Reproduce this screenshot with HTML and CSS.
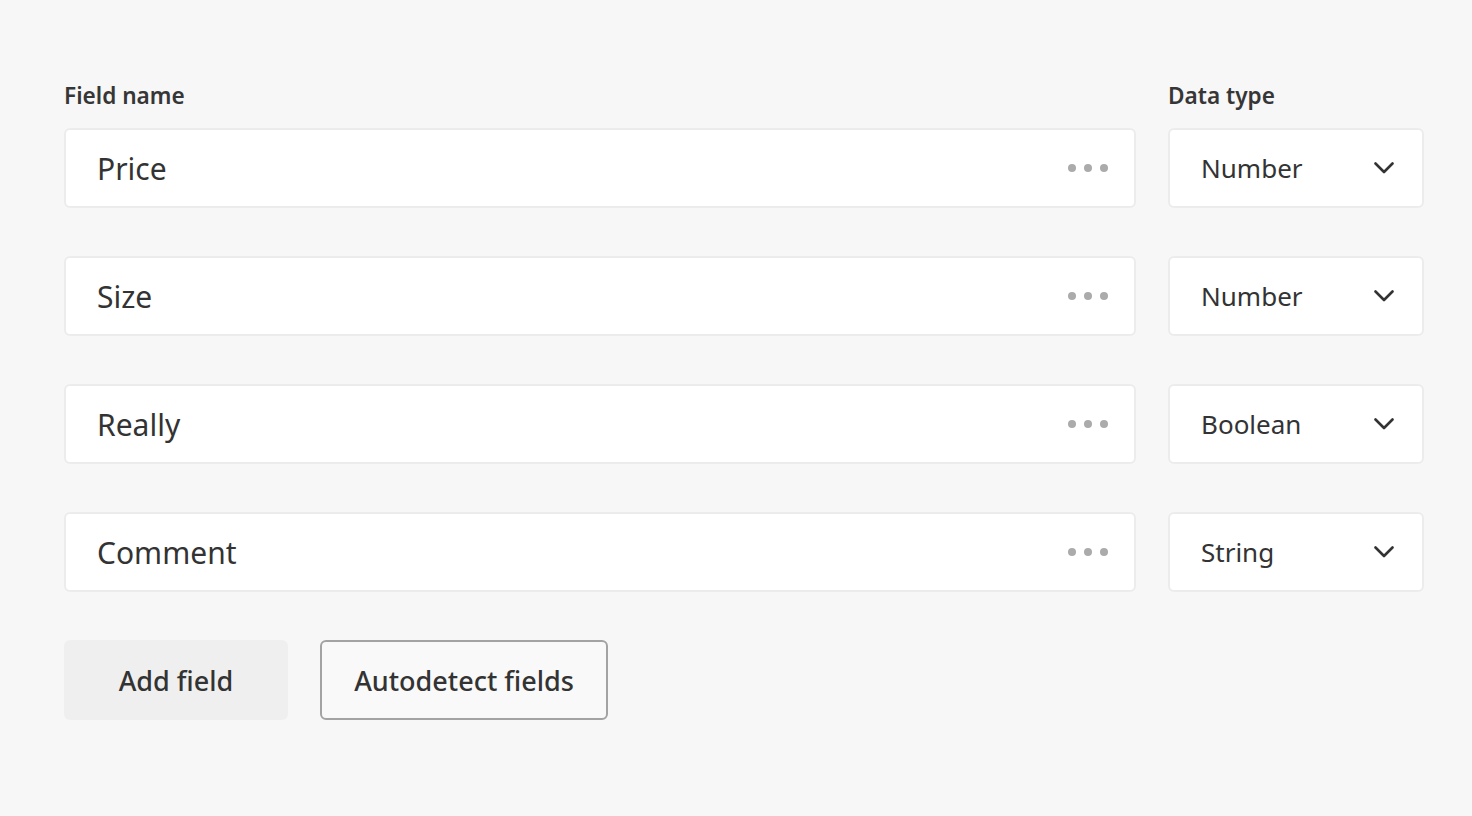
FILE: index.html
```html
<!DOCTYPE html>
<html>
<head>
<meta charset="utf-8">
<link rel="stylesheet" href="styles.css">
</head>
<body>
<div class="form">
  <div class="row head">
    <div class="col-name label">Field name</div>
    <div class="col-type label">Data type</div>
  </div>
  <div class="rows">
    <div class="row">
      <div class="col-name field"><span class="value">Price</span><span class="dots"><i></i><i></i><i></i></span></div>
      <div class="col-type select"><span class="svalue">Number</span><svg class="chev" width="20" height="12" viewBox="0 0 20 12"><path d="M1.5 1.5 L10 10 L18.5 1.5" fill="none" stroke="#333" stroke-width="2.6" stroke-linecap="round" stroke-linejoin="round"/></svg></div>
    </div>
    <div class="row">
      <div class="col-name field"><span class="value">Size</span><span class="dots"><i></i><i></i><i></i></span></div>
      <div class="col-type select"><span class="svalue">Number</span><svg class="chev" width="20" height="12" viewBox="0 0 20 12"><path d="M1.5 1.5 L10 10 L18.5 1.5" fill="none" stroke="#333" stroke-width="2.6" stroke-linecap="round" stroke-linejoin="round"/></svg></div>
    </div>
    <div class="row">
      <div class="col-name field"><span class="value">Really</span><span class="dots"><i></i><i></i><i></i></span></div>
      <div class="col-type select"><span class="svalue">Boolean</span><svg class="chev" width="20" height="12" viewBox="0 0 20 12"><path d="M1.5 1.5 L10 10 L18.5 1.5" fill="none" stroke="#333" stroke-width="2.6" stroke-linecap="round" stroke-linejoin="round"/></svg></div>
    </div>
    <div class="row">
      <div class="col-name field"><span class="value">Comment</span><span class="dots"><i></i><i></i><i></i></span></div>
      <div class="col-type select"><span class="svalue">String</span><svg class="chev" width="20" height="12" viewBox="0 0 20 12"><path d="M1.5 1.5 L10 10 L18.5 1.5" fill="none" stroke="#333" stroke-width="2.6" stroke-linecap="round" stroke-linejoin="round"/></svg></div>
    </div>
  </div>
  <div class="actions">
    <button class="btn btn-fill">Add field</button>
    <button class="btn btn-outline">Autodetect fields</button>
  </div>
</div>
</body>
</html>
```
FILE: styles.css
```css
html, body {
  margin: 0;
  padding: 0;
  background: #f7f7f7;
  font-family: "Noto Sans", "Open Sans", sans-serif;
  color: #333;
}
.form {
  padding: 80px 48px 0 64px;
  width: 1360px;
}
.row {
  display: flex;
  gap: 32px;
}
.col-name { width: 1072px; box-sizing: border-box; }
.col-type { width: 256px; box-sizing: border-box; }
.head { height: 48px; }
.label {
  font-size: 22.6px;
  font-weight: 600;
  line-height: 32px;
  color: #363636;
}
.rows {
  display: flex;
  flex-direction: column;
  gap: 48px;
}
.field, .select {
  height: 80px;
  background: #fff;
  border: 2px solid #ececec;
  border-radius: 6px;
  display: flex;
  align-items: center;
}
.field {
  padding: 0 26px 0 31px;
  justify-content: space-between;
}
.value {
  font-size: 30px;
  color: #333;
}
.dots {
  display: flex;
  gap: 8px;
}
.dots i {
  width: 8px;
  height: 8px;
  border-radius: 50%;
  background: #ababab;
}
.select {
  padding: 0 28px 0 31px;
  justify-content: space-between;
}
.svalue {
  font-size: 26px;
  color: #333;
}
.chev { display: block; }
.actions {
  display: flex;
  gap: 32px;
  margin-top: 48px;
}
.btn {
  height: 80px;
  font-family: inherit;
  font-size: 27px;
  font-weight: 500;
  color: #333;
  border-radius: 6px;
  padding: 0;
  cursor: pointer;
}
.btn-fill {
  width: 224px;
  background: #efefef;
  border: none;
}
.btn-outline {
  width: 288px;
  background: #f9f9f9;
  border: 2px solid #a3a3a3;
}
```
